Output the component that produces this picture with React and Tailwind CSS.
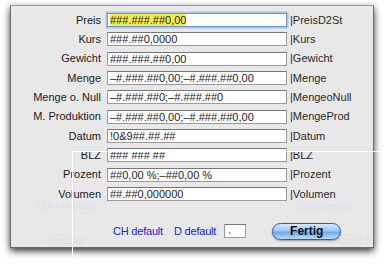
import React from 'react';

const rows = [
  { label: 'Preis', value: '###.###.##0,00', field: '|PreisD2St', focus: true },
  { label: 'Kurs', value: '###.##0,0000', field: '|Kurs' },
  { label: 'Gewicht', value: '###.###.##0,00', field: '|Gewicht' },
  { label: 'Menge', value: '–#.###.##0,00;–#.###.##0,00', field: '|Menge' },
  { label: 'Menge o. Null', value: '–#.###.##0;–#.###.##0', field: '|MengeoNull' },
  { label: 'M. Produktion', value: '–#.###.##0,00;–#.###.##0,00', field: '|MengeProd' },
  { label: 'Datum', value: '!0&9##.##.##', field: '|Datum' },
  { label: 'BLZ', value: '### ### ##', field: '|BLZ' },
  { label: 'Prozent', value: '##0,00 %;–##0,00 %', field: '|Prozent' },
  { label: 'Volumen', value: '##.##0,000000', field: '|Volumen' },
];

// faint text of the window behind the sheet, only where nothing covers it
const ghosts = [
  { text: 'BD-Formate', x: 35, y: 197 },
  { text: 'Zahlungsart', x: 292, y: 197 },
  { text: 'Beispiel', x: 45, y: 231 },
  { text: 'Beispiel 3', x: 322, y: 231 },
];

const App = () => {
  return (
    <div
      className="relative w-[389px] h-[266px] bg-white overflow-hidden"
      style={{ fontFamily: '"Liberation Sans", Arial, sans-serif' }}
    >
      <div className="absolute left-[10px] top-[5px] w-[364px] h-[243px] bg-[#e8e8e8] border border-[#6a6a6a] border-t-[#9a9a9a] shadow-[0_3px_7px_rgba(0,0,0,0.8)]">
        {ghosts.map((g) => (
          <span
            key={g.text}
            className="absolute text-[11px] text-[#dfdfe8] whitespace-nowrap"
            style={{ left: g.x - 10, top: g.y - 5 }}
          >
            {g.text}
          </span>
        ))}

        <div className="relative flex flex-col gap-[5.33px] pt-[7px]">
          {rows.map((r) => (
            <div key={r.label} className="flex items-center h-[14px]">
              <div className="w-[92px] pr-[2px] text-right text-[11px] text-[#1a1a1a] whitespace-nowrap">
                {r.label}
              </div>
              <div
                className={`ml-[4px] w-[180px] h-[14px] flex items-center px-[2px] bg-white text-[11px] text-[#222] whitespace-nowrap overflow-hidden ${
                  r.focus
                    ? 'border border-[#6c97d2] shadow-[0_0_0_1.5px_#a9c6ec]'
                    : 'border border-[#9a9a9a] border-t-[#777]'
                }`}
              >
                <span className={r.focus ? 'bg-[#f6ec4f] leading-[12px]' : 'leading-[12px]'}>{r.value}</span>
              </div>
              <div className="ml-[3px] text-[11px] text-[#2a2a2a] whitespace-nowrap">{r.field}</div>
            </div>
          ))}
        </div>

        <div className="relative flex items-center mt-[22px] h-[17px]">
          <span className="ml-[102px] text-[11px] text-[#2020e0] tracking-[-0.2px]">CH default</span>
          <span className="ml-[11px] text-[11px] text-[#2020e0] tracking-[-0.2px]">D default</span>
          <div className="ml-[8px] w-[22px] h-[14px] bg-white border border-[#9a9a9a] border-t-[#777] text-[10px] leading-[10px] pl-[3px] text-[#444]">
            ,
          </div>
          <button className="ml-[26px] w-[69px] h-[17px] rounded-full border border-[#3a5e93] bg-[linear-gradient(#d6e9fd_0%,#9cc6f3_45%,#74aaea_55%,#b4dcfd_100%)] text-[12px] font-semibold text-[#111] leading-[15px] shadow-[0_1px_2px_rgba(0,0,0,0.35)]">
            Fertig
          </button>
        </div>
      </div>

      {/* stray guide lines lying over the dialog */}
      <div className="absolute left-[72px] top-[151px] w-[317px] h-[1px] bg-white" />
      <div className="absolute left-[72px] top-[151px] w-[1px] h-[115px] bg-white" />
    </div>
  );
};

export default App;
